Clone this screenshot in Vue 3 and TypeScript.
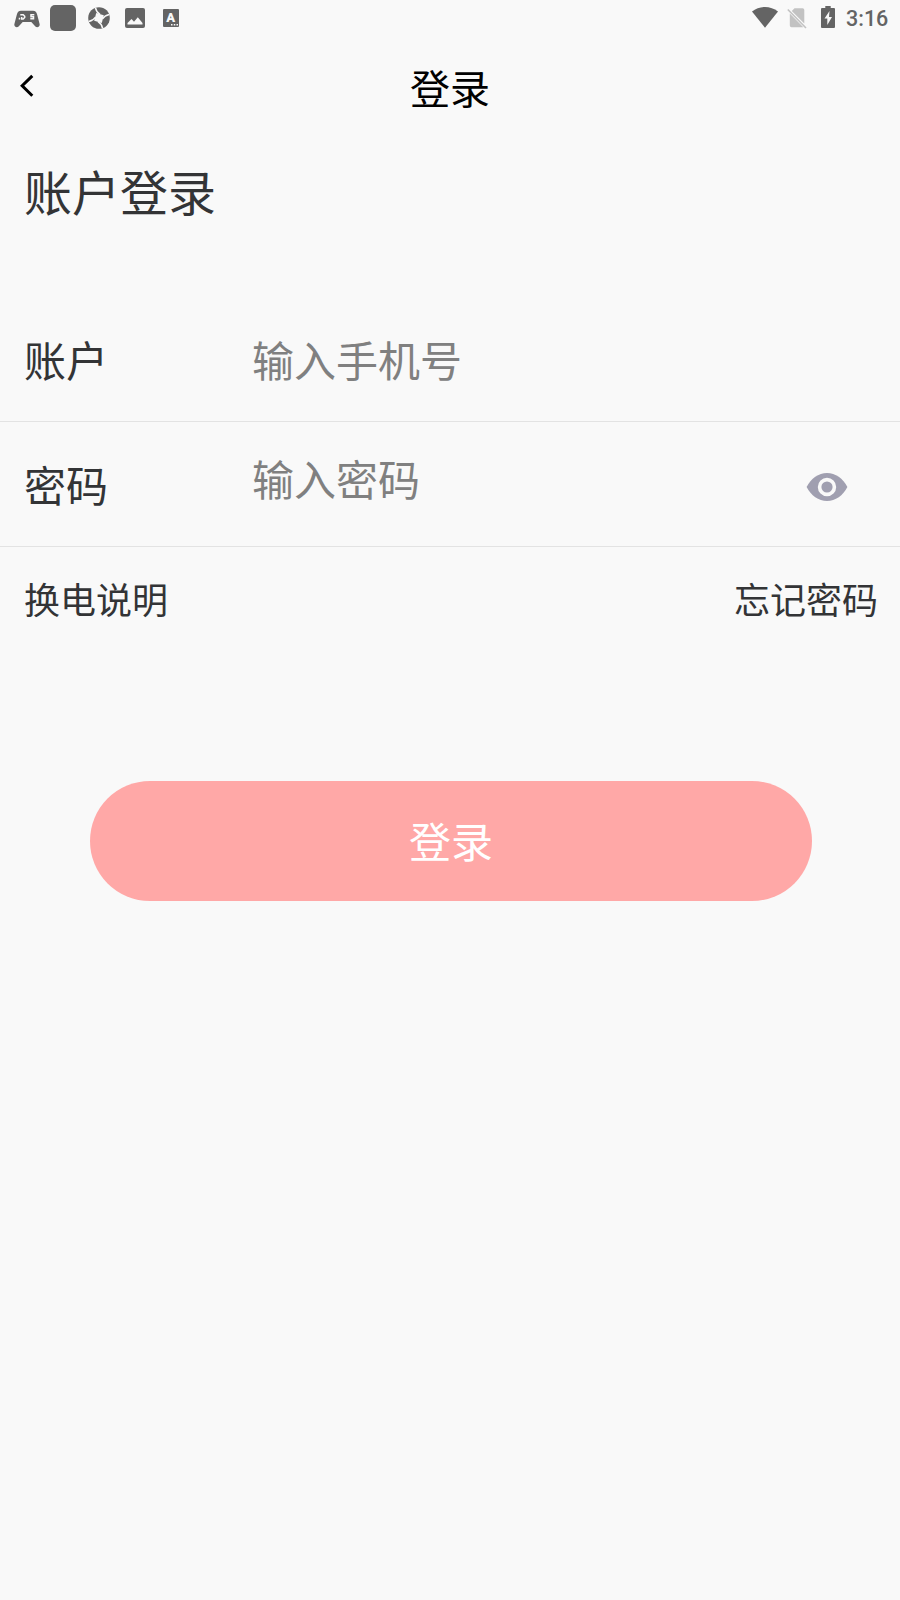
<script setup lang="ts">
import { ref } from 'vue'

const account = ref<string>('')
const password = ref<string>('')
const passwordVisible = ref<boolean>(false)
</script>

<template>
  <main class="screen">
    <div class="status">
      <div class="status-left">
        <svg class="pad" width="26" height="18" viewBox="0 0 26 18">
          <path d="M7 .8h12c2.500 0 3.500 1.200 4.200 4L25.600 14c.6 2.500-2.300 4.200-4.200 2.400L17.300 12H8.700l-4.100 4.400C2.700 18.200-.2 16.500.4 14L2.800 4.800C3.500 2 4.500.8 7 .8z" />
          <path class="glyph" d="M6.300 4.700H9.200L10.700 6.200V7.500L9.200 9H7.700V7M5.500 7.700V9.500M20.300 4.700H17V6.700H19.500V8.700H16.300" />
        </svg>
        <span class="block"></span>
        <svg width="22" height="22" viewBox="0 0 22 22">
          <circle cx="11" cy="11" r="10.800" />
          <path class="cut" d="M8.200 6 15.800 8.200 13.800 16 6.200 13.800z" />
          <path class="swirl" d="M12 7.500Q8.500 5.500 7.500.8M14.500 12Q16.500 8.500 21.200 7.500M10 14.500Q13.500 16.500 14.500 21.200M7.500 10Q5.500 13.500.8 14.500" />
        </svg>
        <svg width="20" height="20" viewBox="0 0 20 20">
          <rect width="20" height="20" rx="2" />
          <path class="cut" d="M2.500 16.500V15L6.500 11 9 13.800 12.800 9.300 17.500 15V16.500z" />
        </svg>
        <svg class="letter" width="16" height="18" viewBox="0 0 16 18">
          <rect width="16" height="18" rx="1" />
          <text x="7.800" y="13" text-anchor="middle">A</text>
          <path class="cut" d="M8 15h1.500v1.500H8zM10.800 15h1.500v1.500h-1.500zM13.500 15H15v1.500h-1.500z" />
        </svg>
      </div>
      <div class="status-right">
        <svg width="26" height="21" viewBox="0 0 26 21">
          <path d="M0 4.600C7.500-1.500 18.500-1.500 26 4.600L13 20.700z" />
        </svg>
        <svg class="sim" width="20" height="21" viewBox="0 0 20 21">
          <path class="faint" d="M7.500.2H15.500A1.800 1.800 0 0 1 17.300 2V15.600L4.800 3zM2.800 5.500 16.300 19.200H4.500A1.800 1.800 0 0 1 2.800 17.500z" />
          <path class="slash" d="M.8 1.500 19 20" />
        </svg>
        <svg class="battery" width="14" height="22" viewBox="0 0 14 22">
          <path d="M4.300 0h5.400v2H13q1 0 1 1v18q0 1-1 1H1q-1 0-1-1V3q0-1 1-1h3.300z" />
          <path class="cut" d="M8.500 5 3.500 12.500H6.300V19L11 11H8z" />
        </svg>
        <span class="time">3:16</span>
      </div>
    </div>

    <header class="navbar">
      <button class="back" type="button" aria-label="返回">
        <svg width="14" height="24" viewBox="0 0 14 24">
          <path d="M12.300 1.900 2.200 11.800 12.300 21.700" />
        </svg>
      </button>
      <h1>登录</h1>
    </header>

    <h2>账户登录</h2>

    <form @submit.prevent>
      <label class="row">
        <span class="name">账户</span>
        <input v-model="account" type="tel" placeholder="输入手机号" />
      </label>
      <div class="row">
        <label class="name" for="password">密码</label>
        <input id="password" v-model="password" class="secret" :type="passwordVisible ? 'text' : 'password'" placeholder="输入密码" />
        <button class="eye" type="button" aria-label="显示密码" @click="passwordVisible = !passwordVisible">
          <svg width="42" height="30" viewBox="0 0 42 30">
            <path d="M.6 15C5 6.500 12.500 1 21 1s16 5.500 20.400 14C37 23.500 29.500 29 21 29S5 23.500.6 15z" />
            <circle class="ring" cx="21" cy="15" r="7.400" />
          </svg>
        </button>
      </div>
      <nav class="links">
        <a>换电说明</a>
        <a>忘记密码</a>
      </nav>
      <button class="submit" type="submit">登录</button>
    </form>
  </main>
</template>

<style>
body {
  margin: 0;
  background: #f9f9f9;
}
</style>

<style scoped>
.screen {
  width: 900px;
  height: 1600px;
  overflow: hidden;
  background: #f9f9f9;
  color: #333436;
  font-family: Roboto, "Noto Sans CJK SC", sans-serif;
}
button,
input {
  border: 0;
  padding: 0;
  background: none;
  font-family: "Noto Sans CJK SC", sans-serif;
}
svg {
  display: block;
  flex: none;
}
.status {
  height: 36px;
  display: flex;
  justify-content: space-between;
  padding: 0 12px 0 14px;
}
.status svg {
  fill: #646464;
}
.status .cut {
  fill: #f9f9f9;
}
.status .glyph {
  fill: none;
  stroke: #f9f9f9;
  stroke-width: 1.5;
}
.status-left,
.status-right {
  display: flex;
  align-items: center;
}
.pad {
  margin: 1px 10px 0 0;
}
.block {
  width: 26px;
  height: 26px;
  border-radius: 5px;
  background: #646464;
  margin-right: 12px;
}
.status-left svg + svg {
  margin-left: 15px;
}
.status-left .letter {
  margin-left: 18px;
}
.letter text {
  fill: #f9f9f9;
  font: 900 13px Roboto, sans-serif;
}
.swirl {
  stroke: #f9f9f9;
  stroke-width: 1.5;
  fill: none;
}
.status-right svg:first-child {
  margin-bottom: 2px;
}
.status-right .sim {
  margin-left: 9px;
}
.status .faint {
  fill: #c2c2c2;
}
.slash {
  stroke: #c2c2c2;
  stroke-width: 1.6;
}
.battery {
  margin: 0 11px 2px 14px;
}
.time {
  width: 42px;
  font-size: 21.5px;
  font-weight: 500;
  line-height: 36px;
  padding-top: 1px;
  color: #646464;
}
.navbar {
  height: 100px;
  display: grid;
  grid-template-columns: 60px 1fr 60px;
  align-items: center;
}
.back {
  width: 14px;
  margin-left: 20px;
}
.back path {
  fill: none;
  stroke: #000;
  stroke-width: 3;
}
h1,
h2 {
  margin: 0;
  font-family: "Noto Sans CJK SC", sans-serif;
  font-weight: 400;
}
h1 {
  font-size: 40px;
  line-height: 60px;
  padding-top: 1px;
  text-align: center;
  color: #000;
}
h2 {
  font-size: 48px;
  line-height: 72px;
  padding: 18px 24px 71px;
}
.row {
  height: 124px;
  display: flex;
  align-items: center;
  padding: 0 24px;
  border-bottom: 1px solid #e3e3e3;
}
.name {
  width: 228px;
  font: 42px/60px "Noto Sans CJK SC", sans-serif;
}
input {
  width: 500px;
  height: 62px;
  margin-bottom: 2px;
  font-size: 42px;
  color: #333436;
  outline: 0;
}
input::placeholder {
  color: #808080;
  opacity: 1;
}
.secret {
  margin-bottom: 14px;
}
.eye {
  margin: 6px 0 0 54px;
}
.eye path {
  fill: #a09fb0;
}
.eye .ring {
  fill: #a09fb0;
  stroke: #f9f9f9;
  stroke-width: 3.6;
}
.links {
  display: flex;
  justify-content: space-between;
  padding: 24px 22px 0 24px;
  font: 36px/54px "Noto Sans CJK SC", sans-serif;
}
.submit {
  display: block;
  width: 722px;
  height: 120px;
  margin: 156px 0 0 90px;
  padding: 0 0 3px;
  border-radius: 60px;
  background: #ffa8a7;
  color: #fff;
  font-size: 42px;
}
</style>
